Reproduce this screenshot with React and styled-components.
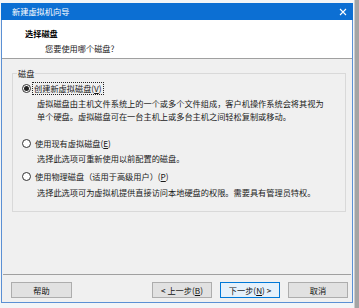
import React from "react";
import styled, { createGlobalStyle } from "styled-components";

const GlobalStyle = createGlobalStyle`
  html, body { margin: 0; padding: 0; }
  body {
    width: 359px;
    height: 308px;
    overflow: hidden;
    background: linear-gradient(to right, #f3f5f7 0, #f3f5f7 354px, #a4a4a4 355px);
    font-family: "Noto Sans CJK SC", "Noto Sans", sans-serif;
    font-size: 8.2px;
    color: #1a1a1a;
  }
`;

const Stage = styled.div`
  padding: 3px 0 0 1px;
`;

const Window = styled.div`
  box-sizing: border-box;
  width: 352px;
  height: 300px;
  display: flex;
  flex-direction: column;
  border: 1px solid #5b90d4;
  border-top: none;
  background: #f0f0f0;
`;

const TitleBar = styled.div`
  height: 17px;
  flex: none;
  margin: 0 -1px;
  background: #0c6fd3;
  color: #fff;
  display: flex;
  align-items: center;
  justify-content: space-between;
  padding: 0 6px 0 11px;
  line-height: 17px;
`;

const Header = styled.div`
  height: 38px;
  flex: none;
  background: #fff;
  border-bottom: 1px solid #a0a0a0;
  padding: 7px 0 0 23px;
  box-sizing: border-box;
  height: 39px;
`;

const HeaderTitle = styled.div`
  font-weight: 700;
  line-height: 12px;
  color: #000;
`;

const HeaderSub = styled.div`
  margin: 3px 0 0 20px;
  line-height: 12px;
`;

const Content = styled.div`
  flex: 1;
  padding: 9px 6px 0 10px;
`;

const Group = styled.fieldset`
  margin: 0;
  padding: 0;
  border: 1px solid #d9d9d9;
  min-width: 0;
`;

const Legend = styled.legend`
  margin-left: 4px;
  padding: 0 1px;
  line-height: 10px;
`;

const GroupBody = styled.div`
  padding: 4px 0 12px 9px;
`;

const RadioRow = styled.div`
  display: flex;
  align-items: center;
  height: 12px;
  margin-top: ${(p) => p.$gap}px;
`;

const Circle = styled.span`
  box-sizing: border-box;
  width: 9px;
  height: 9px;
  border-radius: 50%;
  border: 1px solid #333;
  background: #fff;
  display: flex;
  align-items: center;
  justify-content: center;
  flex: none;
  &::after {
    content: "";
    width: 5px;
    height: 5px;
    border-radius: 50%;
    background: ${(p) => (p.$checked ? "#222" : "transparent")};
  }
`;

const RadioLabel = styled.span`
  margin-left: ${(p) => (p.$focus ? 1 : 2)}px;
  padding: 0 1px;
  line-height: 11px;
  border: 1px dotted ${(p) => (p.$focus ? "#222" : "transparent")};
  white-space: nowrap;
`;

const Desc = styled.div`
  margin: ${(p) => p.$gap}px 0 0 15px;
  width: 292px;
  line-height: 13px;
`;

const Separator = styled.div`
  height: 1px;
  flex: none;
  margin: 0 1px;
  background: #a0a0a0;
`;

const Footer = styled.div`
  flex: none;
  height: 27px;
  box-sizing: border-box;
  display: flex;
  align-items: flex-start;
  gap: 8px;
  padding: 7px 4px 0 9px;
`;

const Button = styled.button`
  box-sizing: border-box;
  width: ${(p) => p.$w || 60}px;
  height: 16px;
  padding: 0;
  font: inherit;
  line-height: 14px;
  color: #111;
  background: ${(p) => (p.$primary ? "#e5f1fb" : "#e1e1e1")};
  border: 1px solid ${(p) => (p.$primary ? "#0078d7" : "#adadad")};
  margin-left: ${(p) => (p.$push ? "auto" : "0")};
`;

const CloseIcon = () => (
  <svg width="8" height="8" viewBox="0 0 8 8">
    <path d="M1 1 L7 7 M7 1 L1 7" stroke="#fff" strokeWidth="1.1" />
  </svg>
);

export default function App() {
  return (
    <>
      <GlobalStyle />
      <Stage>
        <Window>
          <TitleBar>
            <span>新建虚拟机向导</span>
            <CloseIcon />
          </TitleBar>
          <Header>
            <HeaderTitle>选择磁盘</HeaderTitle>
            <HeaderSub>您要使用哪个磁盘?</HeaderSub>
          </Header>
          <Content>
            <Group>
              <Legend>磁盘</Legend>
              <GroupBody>
                <RadioRow $gap={0}>
                  <Circle $checked />
                  <RadioLabel $focus>
                    创建新虚拟磁盘(<u>V</u>)
                  </RadioLabel>
                </RadioRow>
                <Desc $gap={3}>
                  虚拟磁盘由主机文件系统上的一个或多个文件组成，客户机操作系统会将其视为单个硬盘。虚拟磁盘可在一台主机上或多台主机之间轻松复制或移动。
                </Desc>
                <RadioRow $gap={14}>
                  <Circle />
                  <RadioLabel>
                    使用现有虚拟磁盘(<u>E</u>)
                  </RadioLabel>
                </RadioRow>
                <Desc $gap={3}>选择此选项可重新使用以前配置的磁盘。</Desc>
                <RadioRow $gap={5}>
                  <Circle />
                  <RadioLabel>
                    使用物理磁盘（适用于高级用户）(<u>P</u>)
                  </RadioLabel>
                </RadioRow>
                <Desc $gap={4}>
                  选择此选项可为虚拟机提供直接访问本地硬盘的权限。需要具有管理员特权。
                </Desc>
              </GroupBody>
            </Group>
          </Content>
          <Separator />
          <Footer>
            <Button $w={61}>帮助</Button>
            <Button $push>
              &lt; 上一步(<u>B</u>)
            </Button>
            <Button $primary>
              下一步(<u>N</u>) &gt;
            </Button>
            <Button>取消</Button>
          </Footer>
        </Window>
      </Stage>
    </>
  );
}
